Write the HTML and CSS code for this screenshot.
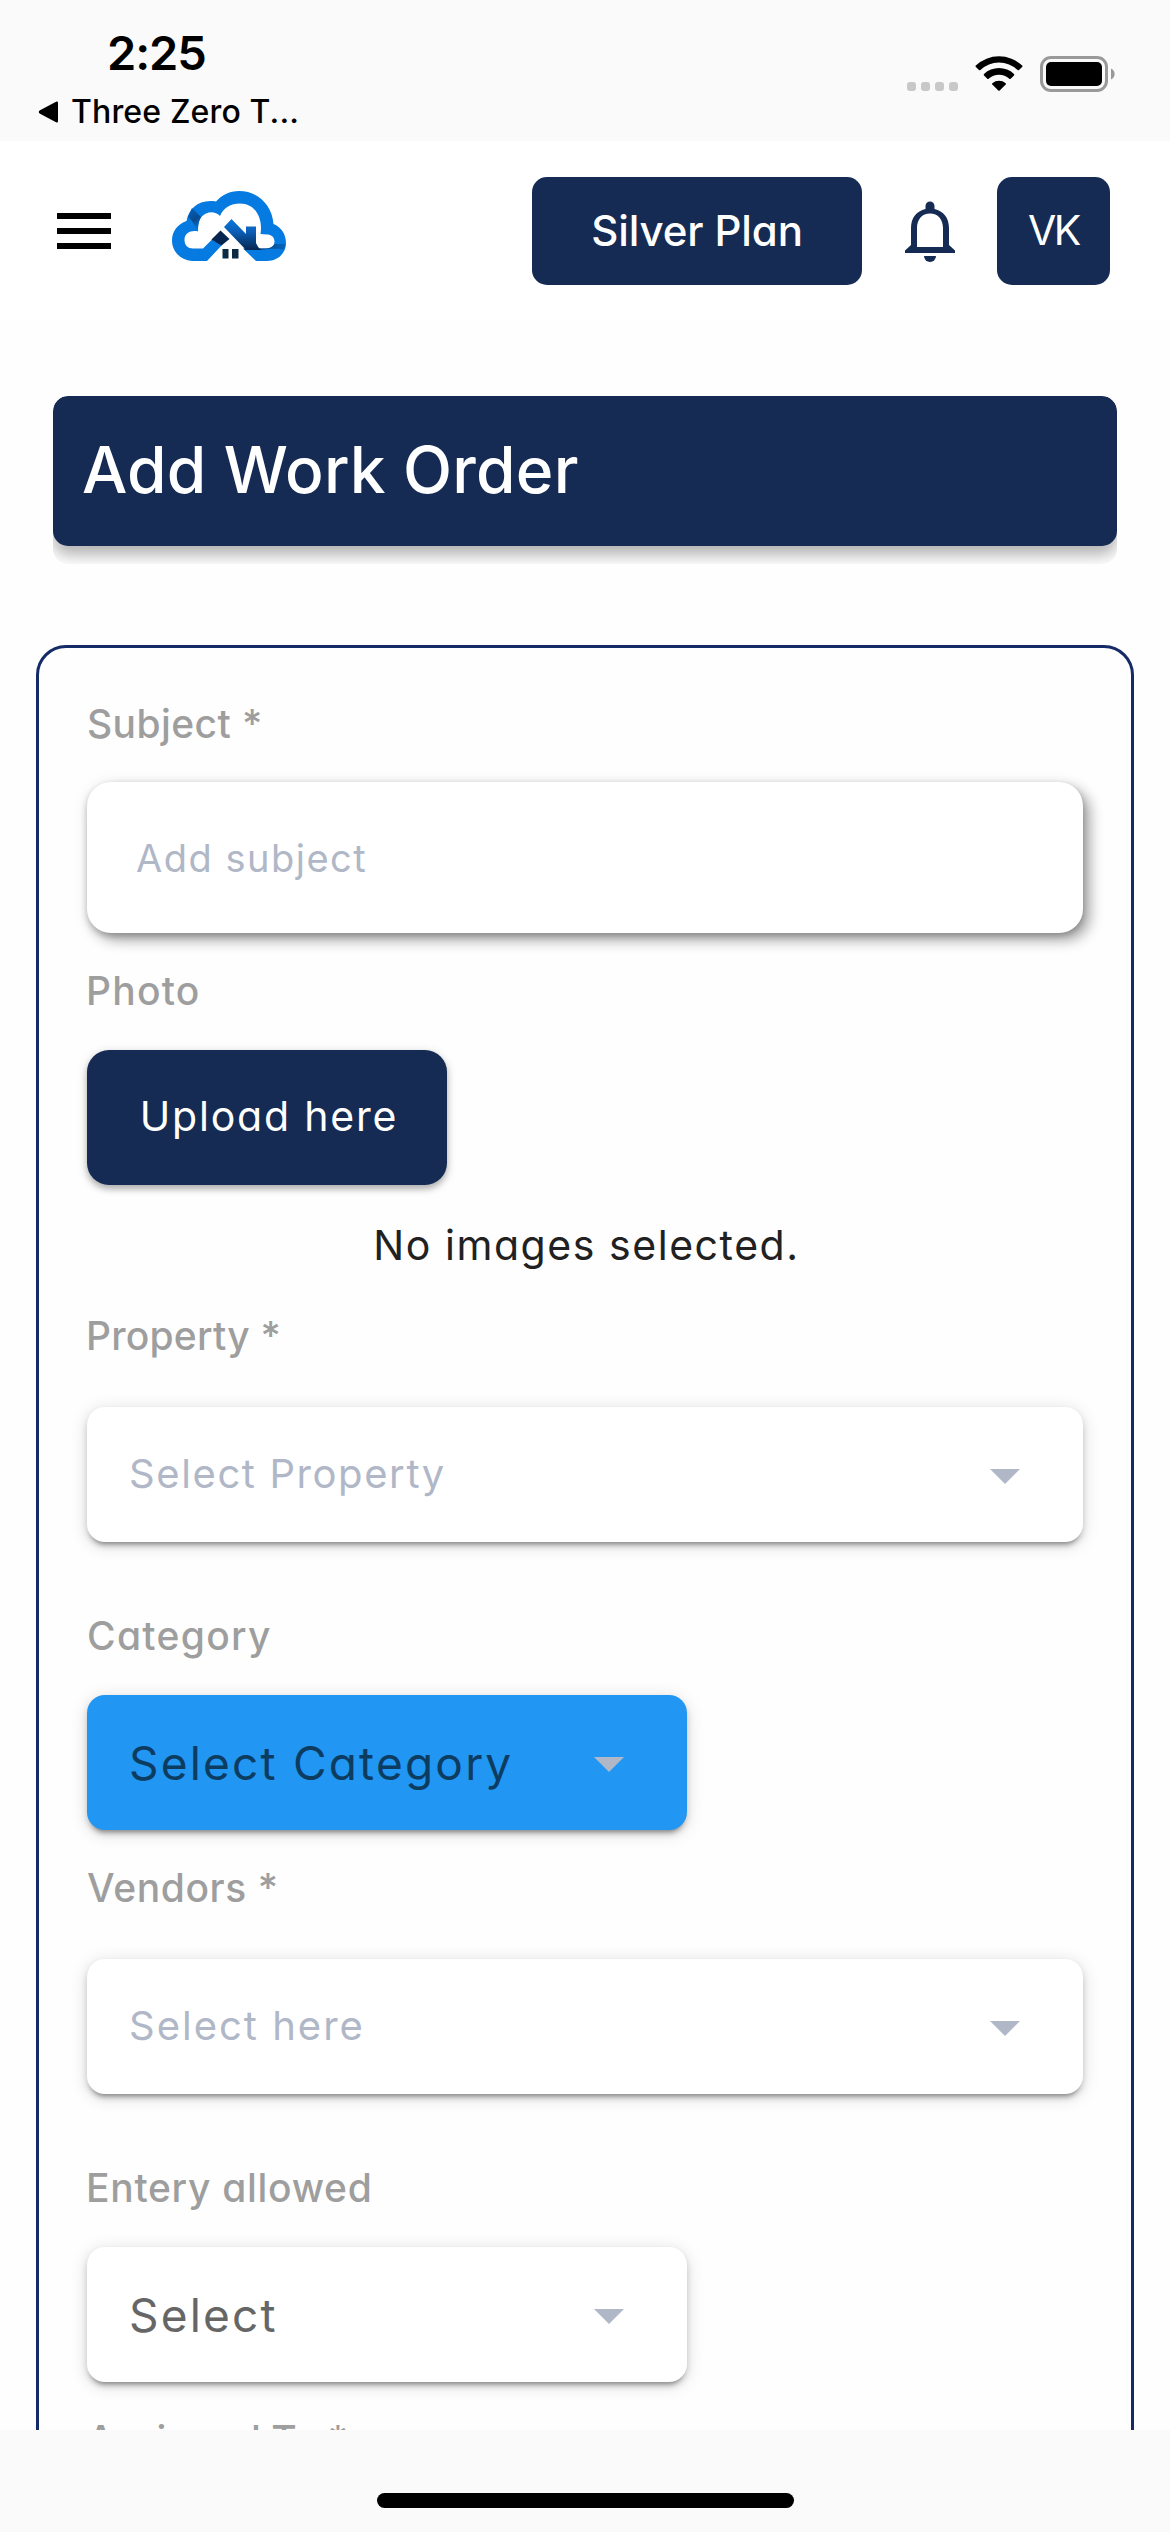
FILE: index.html
```html
<!DOCTYPE html>
<html lang="en">
<head>
<meta charset="utf-8">
<meta name="viewport" content="width=device-width">
<title>Add Work Order</title>
<link rel="stylesheet" href="styles.css">
</head>
<body>
<div class="screen">
  <div class="status">
    <div class="status-left">
      <div class="time">2:25</div>
      <div class="back">
        <svg class="back-icon" viewBox="0 0 22 22"><path d="M19 1.5V20.500L2.500 11.800Q1 11 2.500 10.200Z" fill="#000" stroke="#000" stroke-width="2" stroke-linejoin="round"/></svg>
        <span>Three Zero T...</span>
      </div>
    </div>
    <div class="status-right">
      <div class="signal"><i></i><i></i><i></i><i></i></div>
      <svg class="wifi" viewBox="0 0 48 36">
        <path d="M0.800 10.500Q0.200 11.200 0.900 11.900L4 15Q4.700 15.600 5.400 15A27 27 0 0 1 42.600 15Q43.300 15.600 44 15L47.100 11.900Q47.800 11.200 47.200 10.500A34 34 0 0 0 0.800 10.500Z"/>
        <path d="M9 19Q8.300 19.700 9 20.400L12.300 23.700Q13 24.300 13.700 23.700A15.500 15.500 0 0 1 34.300 23.700Q35 24.300 35.700 23.700L39 20.400Q39.700 19.700 39 19A22 22 0 0 0 9 19Z"/>
        <path d="M17.300 28.200Q16.700 28.900 17.300 29.500L23.300 35.400Q24 36 24.700 35.400L30.700 29.500Q31.300 28.900 30.700 28.200A10.500 10.500 0 0 0 17.300 28.200Z"/>
      </svg>
      <svg class="battery" viewBox="0 0 76 36">
        <rect x="1.500" y="1.500" width="65" height="33" rx="9.500" fill="none" stroke="#999" stroke-width="3"/>
        <rect x="6" y="6" width="56" height="24" rx="5" fill="#000"/>
        <path d="M71 12.500A6 6 0 0 1 71 23.500Z" fill="#999"/>
      </svg>
    </div>
  </div>

  <main class="page">
    <header class="topbar">
      <svg class="menu" viewBox="0 0 54 36"><path d="M0 0H54V6H0ZM0 15H54V21H0ZM0 30H54V36H0Z"/></svg>
      <svg class="logo" viewBox="0 0 115 71">
        <defs>
          <linearGradient id="roof" x1="0" y1="0" x2="0" y2="1"><stop offset="0" stop-color="#0a78dc"/><stop offset=".4" stop-color="#0a5fb8"/><stop offset="1" stop-color="#06264f"/></linearGradient>
          <linearGradient id="fold" x1=".3" y1="0" x2=".7" y2="1"><stop offset="0" stop-color="#0660b8"/><stop offset=".5" stop-color="#084a90"/><stop offset="1" stop-color="#067ae0"/></linearGradient>
          <linearGradient id="base" x1="0" y1="0" x2="1" y2="0"><stop offset="0" stop-color="#06264f"/><stop offset="1" stop-color="#0767c0"/></linearGradient>
        </defs>
        <path fill="#057ae0" fill-rule="evenodd" d="M35 70H20C8 69 0 60 0 49.500C0 40 6 33 14.500 30C17 17 27 8 44 10.500C50 4 58 0 67 0C86 0 100 14 101.500 33C109 36 114 43 114 52C114 62 106 70 95 70H84L71 57.500H93C99 57.500 102.500 55 102.500 50.500C102.500 46 99 43.500 95 43.500L88.500 43C91 28 84 12.500 68 12.500C59 12.500 51 17 48 25C44 21 39 20.500 34 22.500C27 26 25.500 33 26 40.500C19 39 12.500 42 12.500 49C12.500 54 16 57.500 21 57.500H31L42 46.500L50 54Z"/>
        <path fill="url(#fold)" d="M16 26L20 17L29 26Q26 31 26 40L22 33Q20 29 16 26Z"/>
        <path fill="url(#base)" d="M72 57.500H93Q100 57.500 102.500 53H113.500Q113 57 112 58.500Q101 57 88 59H73Z"/>
        <path fill="url(#roof)" d="M52 36L59.500 28L74 43V35.500H84V52Q86 57 89 59H74Z"/>
        <path fill="#06264f" d="M39.500 48.500L48.500 39.500L57.500 48L49.500 54.500Z"/>
        <path fill="#0b2b45" d="M50.500 58H56.500V67.500H50.500ZM60 58H66.500V67.500H60Z"/>
      </svg>
      <button class="plan">Silver Plan</button>
      <svg class="bell" viewBox="0 0 52 62">
        <path fill="#152b53" fill-rule="evenodd" d="M21.500 8V5A4.500 4.500 0 0 1 30.500 5V8C39.500 10 45 17 45 27V44L51 49.500V52H1V49.500L7 44V27C7 17 12.500 10 21.500 8ZM13 46H39V27C39 18.500 34 12.500 26 12.500S13 18.500 13 27Z"/>
        <path fill="#152b53" d="M20 55H32A6 6 0 0 1 20 55Z"/>
      </svg>
      <button class="avatar">VK</button>
    </header>

    <div class="banner-wrap"><h1 class="banner"><span>Add Work Order</span></h1></div>

    <form class="card">
      <label class="label subject">Subject *</label>
      <div class="field input"><span>Add subject</span></div>

      <label class="label photo">Photo</label>
      <button class="upload" type="button">Upload here</button>
      <p class="empty">No images selected.</p>

      <label class="label property">Property *</label>
      <div class="field select"><span>Select Property</span><svg class="caret" viewBox="0 0 30 15"><path d="M0 0H30L15 15Z"/></svg></div>

      <label class="label category">Category</label>
      <div class="field select short blue"><span>Select Category</span><svg class="caret" viewBox="0 0 30 15"><path d="M0 0H30L15 15Z"/></svg></div>

      <label class="label vendors">Vendors *</label>
      <div class="field select here"><span>Select here</span><svg class="caret" viewBox="0 0 30 15"><path d="M0 0H30L15 15Z"/></svg></div>

      <label class="label entry">Entery allowed</label>
      <div class="field select short"><span>Select</span><svg class="caret" viewBox="0 0 30 15"><path d="M0 0H30L15 15Z"/></svg></div>

      <label class="label assigned">Assigned To *</label>
    </form>
  </main>

  <div class="home"><div class="home-bar"></div></div>
</div>
</body>
</html>
```
FILE: styles.css
```css
* { box-sizing: border-box; margin: 0; padding: 0; }
body { background: #fafafa; color: #000; font-family: Inter, "Liberation Sans", sans-serif; }
svg { display: block; flex: none; }
button { border: 0; font: inherit; color: inherit; }

.screen { width: 1170px; height: 2532px; display: flex; flex-direction: column; overflow: hidden; }

/* status bar */
.status { height: 141px; flex: none; display: flex; justify-content: space-between; padding: 0 54px 0 38px; }
.time { margin: 32px 0 0 69px; font-size: 47px; line-height: 41px; font-weight: 600; letter-spacing: -1.1px; }
.back { display: flex; align-items: center; gap: 11px; margin-top: 18px; font-size: 32px; line-height: 41px; font-weight: 500; letter-spacing: .15px; }
.back-icon { width: 22px; height: 22px; }
.status-right { display: flex; align-items: flex-start; padding-top: 55px; }
.signal { display: flex; gap: 5px; padding-top: 27px; }
.signal i { width: 9px; height: 9px; border-radius: 3px; background: #c8c8c8; }
.wifi { width: 48px; height: 36px; margin-left: 17px; }
.battery { width: 76px; height: 36px; margin: 1px 0 0 17px; }

/* page */
.page { flex: 1; min-height: 0; overflow: hidden; background: #fefefe; font-feature-settings: "cv11"; }
.topbar { display: flex; align-items: center; height: 180px; padding: 0 60px 0 57px; background: #fff; }
.menu { width: 54px; height: 36px; }
.logo { width: 115px; height: 71px; margin: -10px 0 0 61px; }
.plan, .avatar { height: 108px; border-radius: 15px; background: #152b53; color: #fff; line-height: 108px; text-align: center; }
.plan { width: 330px; margin-left: auto; font-size: 42px; font-weight: 500; letter-spacing: -.1px; }
.bell { width: 52px; height: 62px; margin: 2px 41px 0 42px; }
.avatar { width: 113px; padding-bottom: 2px; font-size: 41px; letter-spacing: -2.5px; line-height: 106px; }

/* shadow is cut off at the sides and below */
.banner-wrap { height: 168px; margin: 75px 53px 81px; border-radius: 15px; overflow: hidden; }
.banner { height: 150px; padding-left: 29px; border-radius: 15px; background: #152b53; color: #fff; box-shadow: 0 9px 15px rgba(0, 0, 0, .3); font-size: 64px; line-height: 148px; font-weight: 500; letter-spacing: .2px; }

.card { display: flex; flex-direction: column; align-items: flex-start; height: 1900px; margin: 0 36px; padding: 56px 48px; border: 3px solid #152b67; border-radius: 30px; }
.label { display: block; height: 40px; line-height: 40px; font-size: 39px; font-weight: 500; color: #9e9e9e; white-space: nowrap; }
.subject { letter-spacing: .4px; margin-bottom: 38px; }
.photo { letter-spacing: 1.2px; margin: 38px 0 39px -1px; }
.property { letter-spacing: .2px; margin: 51px 0 51px -1px; }
.category { letter-spacing: 1.3px; margin: 74px 0 39px; }
.vendors { letter-spacing: .6px; margin: 38px 0 51px; }
.entry { letter-spacing: .7px; margin: 74px 0 39px -1px; }
.assigned { letter-spacing: 0; margin-top: 38px; }

.field { width: 100%; flex: none; display: flex; align-items: center; background: #fff; color: #b0b7c7; }
.input { height: 151px; padding-left: 49px; border-radius: 24px; font-size: 38px; letter-spacing: 1.5px; box-shadow: 7px 7px 14px rgba(0, 0, 0, .32), 0 3px 6px rgba(0, 0, 0, .2), 0 3px 18px rgba(0, 0, 0, .08); }
.select { height: 135px; padding: 0 63px 2px 42px; justify-content: space-between; border-radius: 18px; font-size: 40px; letter-spacing: 1.6px; box-shadow: 0 6px 4px -4px rgba(0, 0, 0, .3), 0 4px 6px rgba(0, 0, 0, .16), 0 3px 18px rgba(0, 0, 0, .14); }
.here { letter-spacing: 2px; }
.caret { width: 30px; height: 15px; margin-top: 5px; fill: #b0b7c7; }
.short { width: 600px; padding-bottom: 0; font-size: 46px; letter-spacing: 2.2px; color: #666; }
.short .caret { margin-top: 3px; }
.blue { background: #2196f3; color: #0d3c61; }

.upload { width: 360px; height: 135px; flex: none; padding: 0 0 4px 4px; border-radius: 22px; background: #152b53; color: #fff; font-size: 41px; letter-spacing: 1.8px; box-shadow: 0 4px 6px rgba(0, 0, 0, .25), 0 2px 12px rgba(0, 0, 0, .12); }
.empty { align-self: center; margin-top: 40px; padding-left: 3px; font-size: 41px; line-height: 40px; letter-spacing: 1.55px; color: #212121; }

.home { height: 102px; flex: none; padding-top: 63px; }
.home-bar { width: 417px; height: 15px; margin: 0 auto; border-radius: 8px; background: #000; }
```
